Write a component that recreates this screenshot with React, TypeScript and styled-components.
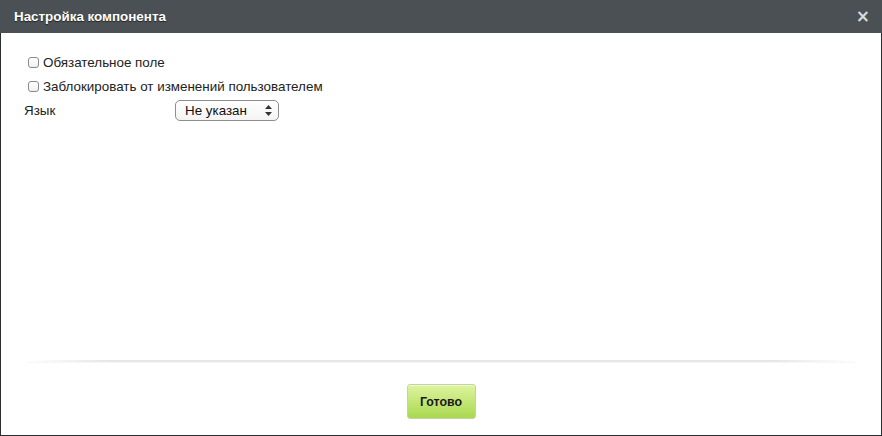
import React from "react";
import styled, { createGlobalStyle } from "styled-components";

const Global = createGlobalStyle`
  html, body { margin: 0; padding: 0; background: #fff; }
  body { font-family: "Liberation Sans", Arial, sans-serif; }
  * { box-sizing: border-box; }
`;

const Dialog = styled.div`
  width: 882px;
  height: 436px;
  display: flex;
  flex-direction: column;
  background: #fff;
  border: 1px solid #2b2e31;
  border-top: none;
`;

const Header = styled.div`
  height: 33px;
  margin: 0 -1px;
  background: #4b5055;
  display: flex;
  align-items: center;
  justify-content: space-between;
  padding: 0 12px 0 14px;
  flex-shrink: 0;
`;

const Title = styled.div`
  color: #fff;
  font-family: "Liberation Sans", Arial, sans-serif;
  font-weight: bold;
  font-size: 13.4px;
  text-shadow: 0 1px 1px #1f2224;
`;

const Close = styled.div`
  color: #d9dbdc;
  font-family: "DejaVu Sans", sans-serif;
  font-weight: bold;
  font-size: 17px;
  line-height: 1;
`;

const Body = styled.div`
  flex: 1;
  padding: 17px 0 0 23px;
  display: flex;
  flex-direction: column;
`;

const CheckRow = styled.label`
  display: flex;
  align-items: center;
  height: 24px;
  padding-left: 4px;
  font-size: 13.4px;
  color: #222;
`;

const Box = styled.span`
  width: 11px;
  height: 11px;
  border: 1px solid #8a8a8a;
  border-radius: 3px;
  background: linear-gradient(#fff, #f0f0f0);
  margin-right: 4px;
`;

const FieldRow = styled.div`
  display: flex;
  align-items: center;
  height: 24px;
  font-size: 13.4px;
  color: #222;
`;

const FieldLabel = styled.span`
  width: 151px;
`;

const Select = styled.div`
  width: 104px;
  height: 21px;
  border: 1px solid #8e8e8e;
  border-radius: 5px;
  background: linear-gradient(#fff, #f4f4f4);
  display: flex;
  align-items: center;
  justify-content: space-between;
  padding: 0 6px 0 9px;
  font-size: 13.4px;
  color: #111;
`;

const Arrows = styled.svg`
  width: 7px;
  height: 11px;
`;

const Separator = styled.div`
  height: 2px;
  margin: 0 26px 0 26px;
  background: linear-gradient(to right, rgba(230,230,230,0) 0%, #e6e6e6 10%, #e6e6e6 90%, rgba(230,230,230,0) 100%);
  box-shadow: 0 1px 0 #f6f6f6;
`;

const Footer = styled.div`
  height: 73px;
  display: flex;
  justify-content: center;
  padding-top: 22px;
`;

const Button = styled.button`
  width: 69px;
  height: 35px;
  border: 1px solid #c4d4a0;
  border-radius: 3px;
  background: linear-gradient(#def49f, #a9d84f);
  font-family: "Liberation Sans", Arial, sans-serif;
  font-weight: bold;
  font-size: 12.4px;
  color: #1a1a1a;
  box-shadow: inset 0 1px 0 rgba(255,255,255,0.5);
  padding: 0;
`;

export default function App() {
  return (
    <>
      <Global />
      <Dialog>
        <Header>
          <Title>Настройка компонента</Title>
          <Close>×</Close>
        </Header>
        <Body>
          <CheckRow>
            <Box />
            Обязательное поле
          </CheckRow>
          <CheckRow>
            <Box />
            Заблокировать от изменений пользователем
          </CheckRow>
          <FieldRow>
            <FieldLabel>Язык</FieldLabel>
            <Select>
              <span>Не указан</span>
              <Arrows viewBox="0 0 7 11">
                <path d="M3.5 0 L7 4 L0 4 Z" fill="#333" />
                <path d="M3.5 11 L7 7 L0 7 Z" fill="#333" />
              </Arrows>
            </Select>
          </FieldRow>
        </Body>
        <Separator />
        <Footer>
          <Button>Готово</Button>
        </Footer>
      </Dialog>
    </>
  );
}
